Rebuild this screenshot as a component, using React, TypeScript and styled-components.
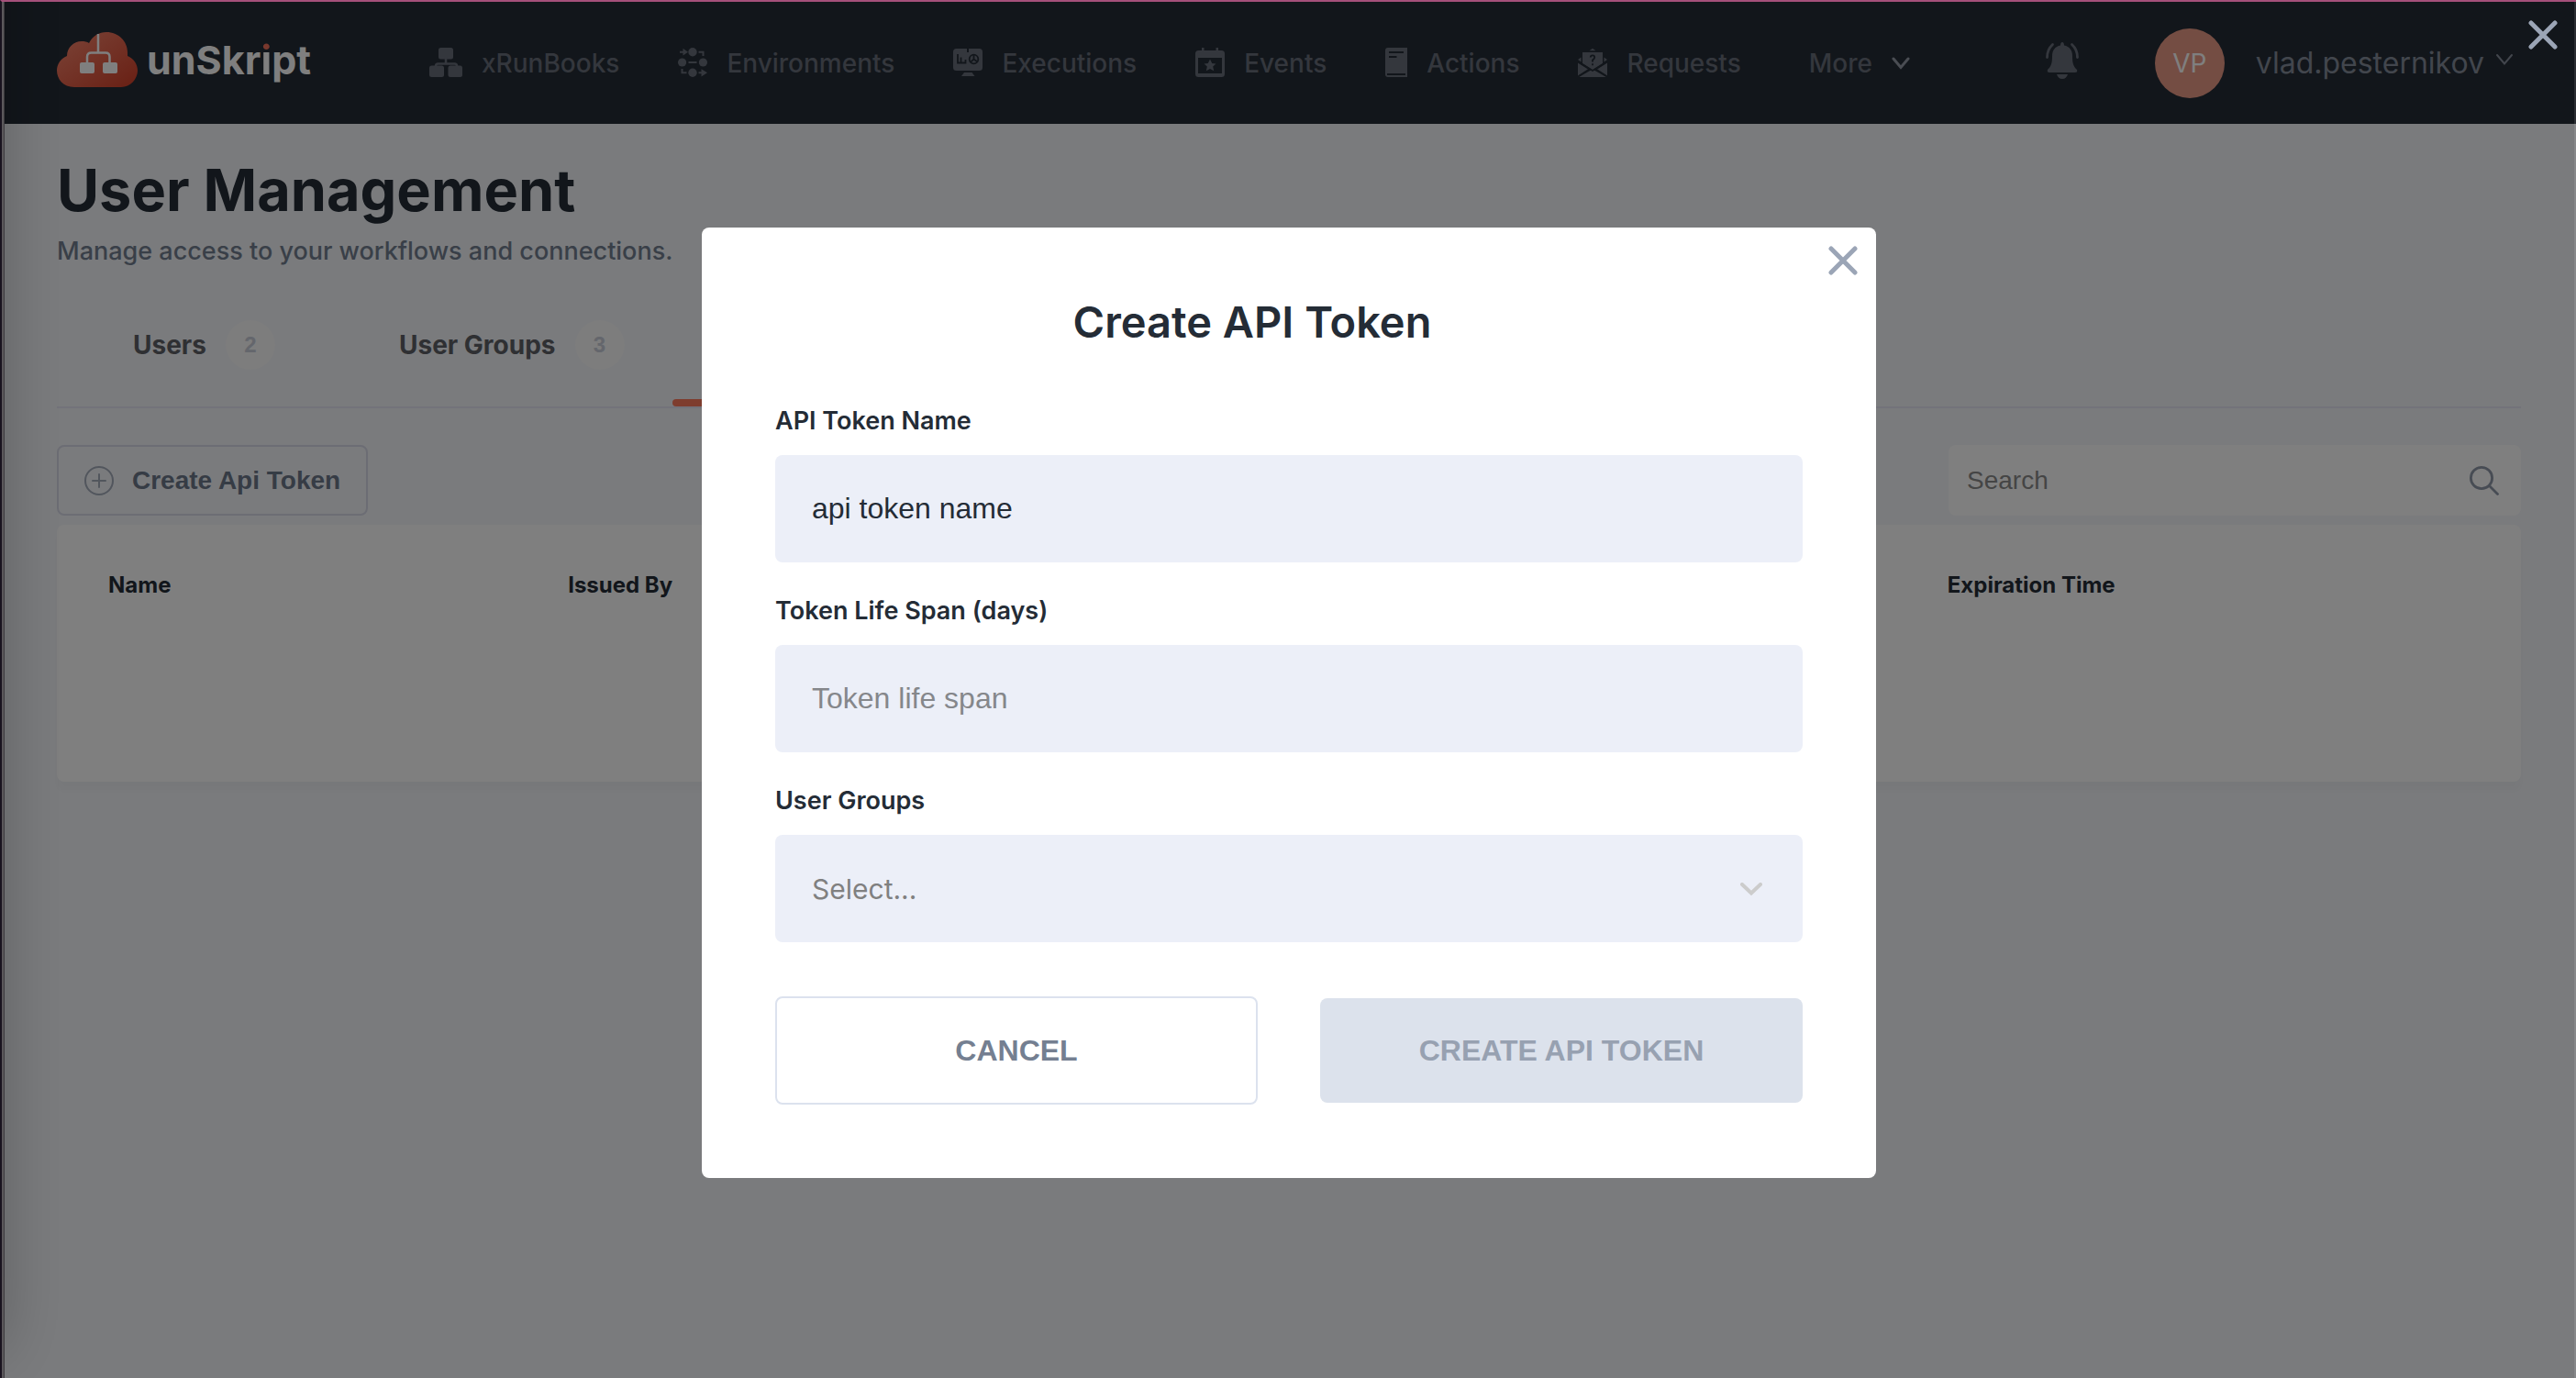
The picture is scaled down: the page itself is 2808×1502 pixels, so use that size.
import React from "react";
import styled, { createGlobalStyle, css } from "styled-components";

const sans = `Inter, "Open Sans", sans-serif`;
const arial = `"Liberation Sans", Arial, sans-serif`;

const GlobalStyle = createGlobalStyle`
  *, *::before, *::after { box-sizing: border-box; }
  body { margin: 0; background: #f4f6fa; font-family: ${sans}; color: #242c36; }
  h1, h2, p { margin: 0; }
  button, input, select { font: inherit; color: inherit; }
  svg { display: block; flex: none; }
`;

/* ---------- window ---------- */

const Shell = styled.div`
  min-height: 100vh;
  padding: 2px 0 0 2px;
  overflow: hidden;
`;

const WindowFrame = styled.div`
  position: fixed;
  inset: 0;
  z-index: 20;
  pointer-events: none;
  border-top: 2px solid #a5507a;
  border-left: 2px solid #19131f;
  box-shadow: inset 2px 0 #5b585b, inset 3px 0 #3e3c40, inset -2px 0 rgba(255, 255, 255, 0.1);
`;

const DrawerShadow = styled.div`
  position: fixed;
  top: -100px;
  bottom: 30px;
  left: -98px;
  width: 100px;
  z-index: 5;
  box-shadow: 0 0 70px rgba(0, 0, 0, 0.24);
`;

/* ---------- header ---------- */

const Header = styled.header`
  display: flex;
  align-items: center;
  height: 133px;
  padding: 0 68px 0 60px;
  background: #242c36;
`;

const Logo = styled.a`
  display: flex;
  align-items: center;
  gap: 10px;
  padding-bottom: 8px;
  color: #fff;
  font-size: 43px;
  font-weight: 700;
  line-height: 60px;
  text-decoration: none;
`;

const LogoI = styled.span`
  color: transparent;
  background: linear-gradient(#f2705a 0 17px, #fff 17px);
  background-clip: text;
  -webkit-background-clip: text;
`;

const Nav = styled.nav`
  display: flex;
  align-items: center;
  gap: 64px;
  margin-left: 129px;
`;

const NavLink = styled.a`
  display: flex;
  align-items: center;
  gap: 21px;
  color: #686e7a;
  font-size: 28px;
  font-weight: 500;
  line-height: 40px;
  text-decoration: none;
  white-space: nowrap;
  svg { margin-bottom: 2px; }
`;

const MoreButton = styled.button`
  display: flex;
  align-items: center;
  gap: 21px;
  margin-left: 10px;
  padding: 0;
  border: 0;
  background: none;
  color: #686e7a;
  font-size: 28px;
  font-weight: 500;
  line-height: 40px;
`;

const Account = styled.div`
  display: flex;
  align-items: center;
  margin-left: auto;
`;

const BellButton = styled.button`
  padding: 0 0 6px;
  margin-right: 83px;
  border: 0;
  background: none;
  color: #686e7a;
`;

const Avatar = styled.span`
  display: grid;
  place-items: center;
  width: 76px;
  height: 76px;
  margin-right: 34px;
  border-radius: 50%;
  background: #e99a86;
  color: #fff;
  font-size: 28px;
`;

const UserMenu = styled.button`
  display: flex;
  align-items: center;
  gap: 12px;
  padding: 0;
  border: 0;
  background: none;
  color: #858c9a;
  font-size: 32px;
  line-height: 44px;
  svg { margin-bottom: 8px; }
`;

/* ---------- page ---------- */

const Main = styled.main`
  padding: 32px 60px 60px;
`;

const Title = styled.h1`
  font-size: 63px;
  font-weight: 700;
  line-height: 80px;
`;

const Subtitle = styled.p`
  margin-top: 6px;
  color: #737f90;
  font-size: 27px;
  font-weight: 500;
  line-height: 42px;
`;

const Tabs = styled.div`
  display: flex;
  margin-top: 14px;
  border-bottom: 2px solid #e6e7f4;
`;

const Tab = styled.button<{ $active?: boolean }>`
  position: relative;
  display: flex;
  align-items: center;
  gap: 21px;
  height: 134px;
  min-width: 230px;
  padding: 0 52px 0 83px;
  border: 0;
  background: none;
  color: #5e6166;
  font-size: 28px;
  font-weight: 700;
  white-space: nowrap;
  ${(p) =>
    p.$active &&
    css`
      &::after {
        content: "";
        position: absolute;
        left: 0;
        right: 0;
        bottom: 0;
        height: 8px;
        border-radius: 4px;
        background: #fd7a5c;
      }
    `}
`;

const Count = styled.span`
  display: grid;
  place-items: center;
  width: 54px;
  height: 54px;
  border-radius: 50%;
  background: #fafafa;
  color: #c8cdd8;
  font-family: ${arial};
  font-size: 24px;
`;

const Toolbar = styled.div`
  display: flex;
  justify-content: space-between;
  margin: 40px 0 10px;
  font-family: ${arial};
  font-size: 28px;
`;

const CreateButton = styled.button`
  display: flex;
  align-items: center;
  gap: 20px;
  height: 77px;
  padding: 0 28px;
  border: 2px solid #d8dae8;
  border-radius: 8px;
  background: none;
  color: #6c788a;
  font-weight: 700;
  svg { color: #a4acbb; }
`;

const SearchBox = styled.label`
  display: flex;
  align-items: center;
  width: 624px;
  padding: 0 24px 0 20px;
  border-radius: 8px;
  background: #fff;
  color: #8f98a8;
`;

const SearchInput = styled.input`
  flex: 1;
  min-width: 0;
  padding: 0;
  border: 0;
  outline: 0;
  background: none;
  &::placeholder { color: #8a8a8a; opacity: 1; }
`;

const Card = styled.section`
  min-height: 280px;
  padding: 50px 56px;
  border-radius: 8px;
  background: #fff;
  box-shadow: 0 10px 4px rgba(0, 0, 0, 0.02);
`;

const Table = styled.table`
  width: 100%;
  table-layout: fixed;
  border-collapse: collapse;
`;

const ColumnHead = styled.th`
  padding: 0;
  font-size: 24px;
  font-weight: 700;
  line-height: 32px;
  text-align: left;
`;

const ActionsHead = styled.td`
  width: 68px;
`;

/* ---------- modal ---------- */

const Overlay = styled.div`
  position: fixed;
  inset: 2px 0 0 2px;
  z-index: 10;
  display: flex;
  justify-content: center;
  align-items: flex-start;
  padding: 246px 40px 40px;
  background: rgba(0, 0, 0, 0.5);
`;

const CloseButton = styled.button`
  position: absolute;
  top: 20px;
  right: 20px;
  padding: 0;
  border: 0;
  background: none;
  color: #9ba5b6;
`;

const Dialog = styled.form`
  position: relative;
  width: 100%;
  max-width: 1280px;
  padding: 74px 80px 80px;
  border-radius: 8px;
  background: #fff;
`;

const DialogTitle = styled.h2`
  padding-right: 80px;
  margin-bottom: 58px;
  font-size: 47px;
  font-weight: 600;
  line-height: 58px;
  text-align: center;
`;

const Fields = styled.div`
  display: flex;
  flex-direction: column;
  gap: 32px;
`;

const Field = styled.div`
  display: flex;
  flex-direction: column;
  gap: 16px;
`;

const FieldLabel = styled.label`
  font-size: 27px;
  font-weight: 600;
  line-height: 42px;
`;

const controlStyle = css`
  width: 100%;
  height: 117px;
  padding: 0 40px;
  border: 0;
  border-radius: 8px;
  outline: 0;
  background: #eceff8;
`;

const TextInput = styled.input`
  ${controlStyle}
  font-family: ${arial};
  font-size: 32px;
  &::placeholder { color: #85878b; opacity: 1; }
`;

const SelectWrap = styled.div`
  display: grid;
  align-items: center;
  > * { grid-area: 1 / 1; }
  > svg { justify-self: end; margin-right: 44px; pointer-events: none; }
`;

const Select = styled.select`
  ${controlStyle}
  appearance: none;
  color: #808080;
  font-size: 30px;
`;

const ButtonRow = styled.div`
  display: grid;
  grid-template-columns: 1fr 1fr;
  align-items: center;
  gap: 68px;
  margin-top: 59px;
`;

const DialogButton = styled.button<{ $filled?: boolean }>`
  height: ${(p) => (p.$filled ? 114 : 118)}px;
  border: ${(p) => (p.$filled ? "0" : "2px solid #dce2ee")};
  border-radius: 8px;
  background: ${(p) => (p.$filled ? "#dce2ec" : "#fff")};
  color: ${(p) => (p.$filled ? "#97a1b1" : "#747f91")};
  font-family: ${arial};
  font-size: 32px;
  font-weight: 700;
`;

/* ---------- icons ---------- */

const CloudLogo = () => (
  <svg width="88" height="60" viewBox="0 0 88 60" aria-hidden="true">
    <defs>
      <linearGradient id="cloud" x1="0" y1="0" x2="1" y2="1">
        <stop offset="0.2" stopColor="#f07a62" />
        <stop offset="1" stopColor="#d23f28" />
      </linearGradient>
    </defs>
    <path
      fill="url(#cloud)"
      d="M19 60C7 60 0 51 0 42C0 35 4 29 11 26C11 17 18 10 27 10C30 10 33 10.500 35 12C39 4 46 0 54 0C67 0 77 10 77 22V26C84 29 88 35 88 42C88 51 80 60 70 60Z"
    />
    <path d="M45 2V22M33 34V27Q33 22.500 37.500 22.500H53Q57.500 22.500 57.500 27V34" fill="none" stroke="#fff" strokeWidth="2.500" />
    <rect x="25" y="33" width="16" height="12" rx="2" fill="#fff" />
    <rect x="50" y="33" width="16" height="12" rx="2" fill="#fff" />
  </svg>
);

const RunBooksIcon = () => (
  <svg width="36" height="32" viewBox="0 0 36 32" fill="currentColor" aria-hidden="true">
    <rect x="10" width="16" height="12.500" rx="2.500" />
    <rect y="19.500" width="16" height="12.500" rx="2.500" />
    <rect x="20.500" y="19.500" width="15.500" height="12.500" rx="2.500" />
    <path d="M18 11V17.500M7 20Q7 17.500 9.500 17.500H27.500Q30 17.500 30 20" fill="none" stroke="currentColor" strokeWidth="2.500" />
  </svg>
);

const EnvironmentsIcon = () => (
  <svg width="32" height="32" viewBox="0 0 32 32" fill="currentColor" aria-hidden="true">
    <circle cx="16" cy="4.700" r="4.700" />
    <circle cx="4.600" cy="16" r="4.600" />
    <circle cx="27.400" cy="16" r="4.600" />
    <circle cx="16" cy="27.300" r="4.700" />
    <path d="M2 4.700H7M11.500 16H20.500M22.500 4.700H27.500V9M4.500 23V27.300H9.500M22.500 27.300H27" fill="none" stroke="currentColor" strokeWidth="2" />
    <path d="M5.500 0.800L11 4.700L5.500 8.600ZM25.500 23.200L32 27.300L25.500 31.400Z" />
  </svg>
);

const ExecutionsIcon = () => (
  <svg width="32" height="32" viewBox="0 0 32 32" aria-hidden="true">
    <path
      fill="currentColor"
      d="M3.500 1H15V5H17V1H28.500Q32 1 32 4.500V21.500Q32 25 28.500 25H3.500Q0 25 0 21.500V4.500Q0 1 3.500 1ZM12 27H20.500L23.500 31H9Z"
    />
    <g fill="none" stroke="#242c36" strokeWidth="1.800">
      <path d="M5 7V16.500H8.500V10.500M8.500 16.500H13.500V13" />
      <circle cx="22.500" cy="12.500" r="4.800" />
      <path d="M22.500 7.700V12.500L26.300 15.300M22.500 12.500L18.800 15.800" />
    </g>
  </svg>
);

const EventsIcon = () => (
  <svg width="32" height="32" viewBox="0 0 32 32" aria-hidden="true">
    <path
      fill="currentColor"
      fillRule="evenodd"
      d="M7 0H9.500V3H22.500V0H25V3H28.500Q32 3 32 6.500V28.500Q32 32 28.500 32H3.500Q0 32 0 28.500V6.500Q0 3 3.500 3H7ZM3 11V28H29V11Z"
    />
    <path fill="currentColor" d="M16 12.500L18.200 17L22.500 17.600L19.200 20.600L20.200 25.300L16 23L11.800 25.300L12.800 20.600L9.500 17.600L13.800 17Z" />
  </svg>
);

const ActionsIcon = () => (
  <svg width="24" height="32" viewBox="0 0 24 32" aria-hidden="true">
    <path fill="currentColor" d="M3 0H24V32H3Q0 32 0 29V3Q0 0 3 0Z" />
    <path d="M4 5H20M4 10H12.500M2 29H22" stroke="#242c36" strokeWidth="2" />
  </svg>
);

const RequestsIcon = () => (
  <svg width="32" height="32" viewBox="0 0 32 32" aria-hidden="true">
    <path fill="currentColor" d="M16 0.800L19.500 3.200H12.500ZM5 5H27V17L16 24L5 17ZM0 16.500L11 23.500L0 30.500ZM32 16.500L21 23.500L32 30.500ZM16 23.500L31 32H1ZM0 13L3.500 10.500V15.500ZM32 13L28.500 10.500V15.500Z" />
    <path d="M0.500 15.500L16 25L31.500 15.500M1 31L13 23.200M31 31L19 23.200" fill="none" stroke="#242c36" strokeWidth="1.500" />
    <path d="M13.800 10.500Q13.800 8.300 16 8.300Q18.200 8.300 18.200 10.500Q18.200 12 16 13.500V15.500M16 17.300V19.300" fill="none" stroke="#242c36" strokeWidth="1.800" />
  </svg>
);

const BellIcon = () => (
  <svg width="36" height="40" viewBox="0 0 36 40" fill="currentColor" aria-hidden="true">
    <path d="M18 0Q20 0 20 3.500C26 4.500 29 9 29 15C29 24 30.500 26.500 34 30Q35 33 32 33H4Q1 33 2 30C5.500 26.500 7 24 7 15C7 9 10 4.500 16 3.500Q16 0 18 0Z" />
    <path d="M12 35H24Q22.500 40 18 40Q13.500 40 12 35Z" />
    <path d="M7.500 2.500Q1.500 8 1.500 16.500M28.500 2.500Q34.500 8 34.500 16.500" fill="none" stroke="currentColor" strokeWidth="2.800" strokeLinecap="round" />
  </svg>
);

const Chevron = ({ color, width, stroke }: { color: string; width: number; stroke: number }) => (
  <svg width={width} height="14" viewBox={`0 0 ${width} 14`} aria-hidden="true">
    <path d={`M2 2L${width / 2} 11.500L${width - 2} 2`} fill="none" stroke={color} strokeWidth={stroke} strokeLinecap="round" />
  </svg>
);

const CloseIcon = () => (
  <svg width="32" height="32" viewBox="0 0 32 32" aria-hidden="true">
    <path d="M3 3L29 29M29 3L3 29" stroke="currentColor" strokeWidth="5" strokeLinecap="round" />
  </svg>
);

const PlusCircle = () => (
  <svg width="32" height="32" viewBox="0 0 32 32" fill="none" stroke="currentColor" strokeWidth="2" aria-hidden="true">
    <circle cx="16" cy="16" r="15" />
    <path d="M16 9V23M9 16H23" strokeLinecap="round" />
  </svg>
);

const SearchIcon = () => (
  <svg width="32" height="32" viewBox="0 0 32 32" fill="none" stroke="currentColor" strokeWidth="2.800" aria-hidden="true">
    <circle cx="13" cy="13" r="11.600" />
    <path d="M21.500 21.500L30.500 30.500" strokeLinecap="round" />
  </svg>
);

const links = [
  { label: "xRunBooks", Icon: RunBooksIcon },
  { label: "Environments", Icon: EnvironmentsIcon },
  { label: "Executions", Icon: ExecutionsIcon },
  { label: "Events", Icon: EventsIcon },
  { label: "Actions", Icon: ActionsIcon },
  { label: "Requests", Icon: RequestsIcon },
];

export default function App() {
  return (
    <Shell>
      <GlobalStyle />
      <Header>
        <Logo href="#">
          <CloudLogo />
          <span>
            unSkr<LogoI>i</LogoI>pt
          </span>
        </Logo>
        <Nav>
          {links.map(({ label, Icon }) => (
            <NavLink key={label} href="#">
              <Icon />
              {label}
            </NavLink>
          ))}
          <MoreButton type="button">
            More
            <Chevron color="#949aa6" width={20} stroke={3} />
          </MoreButton>
        </Nav>
        <Account>
          <BellButton type="button" aria-label="Notifications">
            <BellIcon />
          </BellButton>
          <Avatar>VP</Avatar>
          <UserMenu type="button">
            vlad.pesternikov
            <Chevron color="#858c9a" width={20} stroke={2} />
          </UserMenu>
        </Account>
      </Header>

      <Main>
        <Title>User Management</Title>
        <Subtitle>Manage access to your workflows and connections.</Subtitle>
        <Tabs role="tablist">
          <Tab type="button" role="tab">
            Users <Count>2</Count>
          </Tab>
          <Tab type="button" role="tab">
            User Groups <Count>3</Count>
          </Tab>
          <Tab type="button" role="tab" aria-label="API Tokens" aria-selected $active />
        </Tabs>
        <Toolbar>
          <CreateButton type="button">
            <PlusCircle />
            Create Api Token
          </CreateButton>
          <SearchBox>
            <SearchInput type="text" placeholder="Search" aria-label="Search" />
            <SearchIcon />
          </SearchBox>
        </Toolbar>
        <Card>
          <Table>
            <thead>
              <tr>
                <ColumnHead scope="col">Name</ColumnHead>
                <ColumnHead scope="col">Issued By</ColumnHead>
                <ColumnHead scope="col" />
                <ColumnHead scope="col" />
                <ColumnHead scope="col">Expiration Time</ColumnHead>
                <ActionsHead />
              </tr>
            </thead>
          </Table>
        </Card>
      </Main>

      <DrawerShadow />

      <Overlay>
        <Dialog role="dialog" aria-modal="true" aria-labelledby="dialog-title" onSubmit={(e) => e.preventDefault()}>
          <CloseButton type="button" aria-label="Close dialog">
            <CloseIcon />
          </CloseButton>
          <DialogTitle id="dialog-title">Create API Token</DialogTitle>
          <Fields>
            <Field>
              <FieldLabel htmlFor="token-name">API Token Name</FieldLabel>
              <TextInput id="token-name" type="text" defaultValue="api token name" />
            </Field>
            <Field>
              <FieldLabel htmlFor="token-life">Token Life Span (days)</FieldLabel>
              <TextInput id="token-life" type="text" placeholder="Token life span" />
            </Field>
            <Field>
              <FieldLabel htmlFor="token-groups">User Groups</FieldLabel>
              <SelectWrap>
                <Select id="token-groups" defaultValue="">
                  <option value="">Select...</option>
                </Select>
                <Chevron color="#cccccc" width={24} stroke={4} />
              </SelectWrap>
            </Field>
          </Fields>
          <ButtonRow>
            <DialogButton type="button">CANCEL</DialogButton>
            <DialogButton type="submit" disabled $filled>
              CREATE API TOKEN
            </DialogButton>
          </ButtonRow>
        </Dialog>
        <CloseButton type="button" aria-label="Close">
          <CloseIcon />
        </CloseButton>
      </Overlay>

      <WindowFrame />
    </Shell>
  );
}
